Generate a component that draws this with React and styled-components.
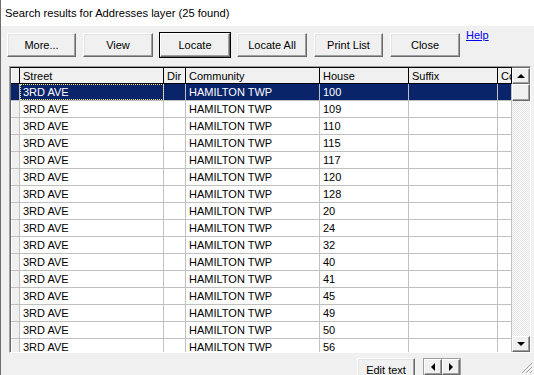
import React from "react";
import styled, { createGlobalStyle } from "styled-components";

const GlobalStyle = createGlobalStyle`
  html, body {
    margin: 0;
    padding: 0;
    background: #f0f0f0;
  }
  body {
    font-family: "Liberation Sans", Arial, sans-serif;
    font-size: 11px;
    color: #000;
  }
`;

const houses = ["100", "109", "110", "115", "117", "120", "128", "20", "24", "32", "40", "41", "45", "49", "50", "56"];

const columns = [
  { key: "street", title: "Street", width: 144 },
  { key: "dir", title: "Dir", width: 22 },
  { key: "community", title: "Community", width: 134 },
  { key: "house", title: "House", width: 89 },
  { key: "suffix", title: "Suffix", width: 89 },
  { key: "co", title: "Co", width: 14 },
];

const template = `9px ${columns.map((c) => c.width + "px").join(" ")}`;

const Window = styled.div`
  position: relative;
  width: 534px;
  height: 375px;
  background: #f0f0f0;
  overflow: hidden;
  display: flex;
  flex-direction: column;
  border-left: 1px solid #6d6d6d;
  box-sizing: border-box;
`;

const TitleBar = styled.div`
  height: 26px;
  flex: none;
  background: #fff;
  display: flex;
  align-items: center;
  padding-left: 4px;
  font-size: 11.2px;
`;

const Toolbar = styled.div`
  display: flex;
  align-items: flex-start;
  gap: 7px;
  padding: 7px 0 0 6px;
  height: 40px;
  flex: none;
  box-sizing: border-box;
`;

const Button = styled.button`
  width: ${(p) => p.$w || 70}px;
  height: 24px;
  padding: 0;
  font-family: inherit;
  font-size: 11px;
  color: #000;
  background: #f0f0f0;
  border: 1px solid;
  border-color: #fff #696969 #696969 #fff;
  box-shadow: ${(p) =>
    p.$default
      ? "0 0 0 1px #000, inset -1px -1px 0 #a0a0a0"
      : "inset -1px -1px 0 #a0a0a0, inset 1px 1px 0 #e3e3e3"};
  box-sizing: border-box;
`;

const HelpLink = styled.a`
  color: #0000ee;
  text-decoration: underline;
  font-size: 11px;
  margin-top: -4px;
  margin-left: -1px;
`;

const GridFrame = styled.div`
  margin: 0 0 0 8px;
  width: 522px;
  height: 287px;
  flex: none;
  box-sizing: border-box;
  border: 1px solid;
  border-color: #a0a0a0 #fff #fff #a0a0a0;
  display: flex;
  background: #fff;
  overflow: hidden;
`;

const GridBody = styled.div`
  width: 502px;
  overflow: hidden;
  border-left: 1px solid #696969;
  border-top: 1px solid #000;
`;

const Row = styled.div`
  display: grid;
  grid-template-columns: ${template};
  height: ${(p) => (p.$header ? 16 : 17)}px;
  box-sizing: border-box;
  border-bottom: 1px solid ${(p) => (p.$header ? "#000" : "#c0c0c0")};
  background: ${(p) => (p.$selected ? "#0a246a" : p.$header ? "#f0f0f0" : "#fff")};
  color: ${(p) => (p.$selected ? "#fff" : "#000")};
`;

const Cell = styled.div`
  box-sizing: border-box;
  padding-left: ${(p) => (p.$indicator ? 0 : 3)}px;
  padding-top: 1px;
  border-right: 1px solid ${(p) => (p.$header ? "#000" : "#c0c0c0")};
  white-space: nowrap;
  overflow: hidden;
  line-height: 15px;
  background: ${(p) => (p.$indicator && !p.$selected ? "#f0f0f0" : "transparent")};
  box-shadow: ${(p) => (p.$indicator && !p.$selected ? "inset 1px 0 0 #fff" : "none")};
  outline: ${(p) => (p.$focus ? "1px dotted #f7e08a" : "none")};
  outline-offset: -1px;
`;

const ScrollBar = styled.div`
  width: 18px;
  display: flex;
  flex-direction: column;
  border-top: 1px solid #696969;
  background: repeating-conic-gradient(#fff 0 25%, #e3e3e3 0 50%) 0 0 / 2px 2px;
`;

const ScrollButton = styled.div`
  height: 16px;
  flex: none;
  box-sizing: border-box;
  background: #f0f0f0;
  border: 1px solid;
  border-color: #fff #696969 #696969 #fff;
  box-shadow: inset -1px -1px 0 #a0a0a0;
  display: flex;
  align-items: center;
  justify-content: center;
`;

const Thumb = styled(ScrollButton)`
  height: 17px;
`;

const Track = styled.div`
  flex: 1;
`;

const Triangle = styled.div`
  width: 0;
  height: 0;
  border-left: ${(p) => (p.$dir === "right" ? "4px solid #000" : p.$dir === "left" ? "none" : "4px solid transparent")};
  border-right: ${(p) => (p.$dir === "left" ? "4px solid #000" : p.$dir === "right" ? "none" : "4px solid transparent")};
  border-top: ${(p) => (p.$dir === "down" ? "4px solid #000" : p.$dir === "up" ? "none" : "4px solid transparent")};
  border-bottom: ${(p) => (p.$dir === "up" ? "4px solid #000" : p.$dir === "down" ? "none" : "4px solid transparent")};
`;

const BottomBar = styled.div`
  display: flex;
  align-items: flex-start;
  padding: 5px 0 0 356px;
  gap: 8px;
`;

const ArrowGroup = styled.div`
  display: flex;
  height: 18px;
  border: 1px solid #a0a0a0;
  background: #fff;
`;

const ArrowButton = styled(ScrollButton)`
  width: 18px;
  height: 16px;
`;

const Grip = styled.svg`
  position: absolute;
  right: 1px;
  bottom: 1px;
`;

export default function App() {
  return (
    <>
      <GlobalStyle />
      <Window>
        <TitleBar>Search results for Addresses layer (25 found)</TitleBar>
        <Toolbar>
          <Button $w={69}>More...</Button>
          <Button $w={70}>View</Button>
          <Button $w={70} $default>Locate</Button>
          <Button $w={70}>Locate All</Button>
          <Button $w={69}>Print List</Button>
          <Button $w={70}>Close</Button>
          <HelpLink href="#">Help</HelpLink>
        </Toolbar>
        <GridFrame>
          <GridBody>
            <Row $header>
              <Cell $header $indicator />
              {columns.map((c) => (
                <Cell $header key={c.key}>{c.title}</Cell>
              ))}
            </Row>
            {houses.map((h, i) => (
              <Row key={h} $selected={i === 0}>
                <Cell $indicator $selected={i === 0} />
                <Cell $focus={i === 0}>3RD AVE</Cell>
                <Cell />
                <Cell>HAMILTON TWP</Cell>
                <Cell>{h}</Cell>
                <Cell />
                <Cell />
              </Row>
            ))}
          </GridBody>
          <ScrollBar>
            <ScrollButton>
              <Triangle $dir="up" />
            </ScrollButton>
            <Thumb />
            <Track />
            <ScrollButton>
              <Triangle $dir="down" />
            </ScrollButton>
          </ScrollBar>
        </GridFrame>
        <BottomBar>
          <Button $w={58}>Edit text</Button>
          <ArrowGroup>
            <ArrowButton>
              <Triangle $dir="left" />
            </ArrowButton>
            <ArrowButton>
              <Triangle $dir="right" />
            </ArrowButton>
          </ArrowGroup>
        </BottomBar>
        <Grip width="12" height="12" viewBox="0 0 12 12">
          <path d="M11 1 L1 11 M11 5 L5 11 M11 9 L9 11" stroke="#a0a0a0" strokeWidth="1" />
          <path d="M12 2 L2 12 M12 6 L6 12 M12 10 L10 12" stroke="#fff" strokeWidth="1" />
        </Grip>
      </Window>
    </>
  );
}
